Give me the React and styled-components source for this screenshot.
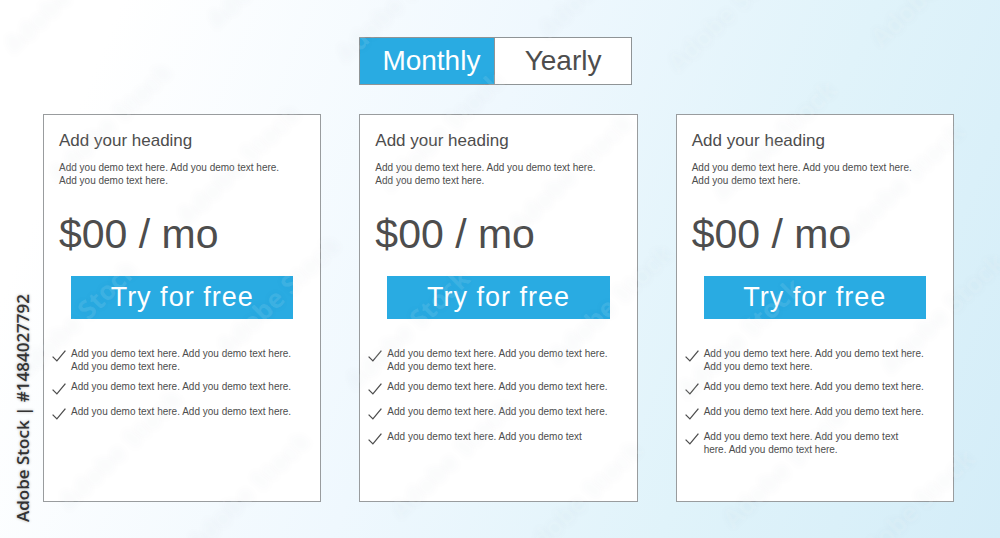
import React, { useState } from "react";
import styled, { createGlobalStyle } from "styled-components";

const GlobalStyle = createGlobalStyle`
  * {
    box-sizing: border-box;
  }

  body {
    margin: 0;
    font-family: "Liberation Sans", Arial, sans-serif;
    color: #4d4d4d;
  }
`;

const Page = styled.main`
  position: relative;
  min-height: 100vh;
  padding: 37px 46px 36px 43px;
  display: flex;
  flex-direction: column;
  gap: 29px;
  overflow: hidden;
  background: linear-gradient(112deg, #ffffff 10%, #eff8fe 45%, #e0f3fa 72%, #d4edf8 100%);
`;

const Columns = styled.div`
  display: grid;
  grid-template-columns: repeat(3, 1fr);
  column-gap: 38px;
  flex: ${props => (props.$fill ? 1 : "none")};
`;

const Toggle = styled.div`
  grid-column: 2;
  height: 48px;
  margin-right: 6px;
  display: flex;
  border: 1px solid #8f9496;
  background: #ffffff;
`;

const ToggleButton = styled.button`
  width: 50%;
  padding: 0;
  padding-left: ${props => (props.$divided ? "8px" : 0)};
  border: none;
  border-right: ${props => (props.$divided ? "1px solid #8f9496" : "none")};
  font: inherit;
  font-size: 28px;
  line-height: 44px;
  cursor: pointer;
  color: ${props => (props.$active ? "#ffffff" : "#4d4d4d")};
  background: ${props => (props.$active ? "#29abe2" : "#ffffff")};
`;

const Card = styled.section`
  padding: 16px 0;
  border: 1px solid #999c9e;
  background: #ffffff;
`;

const Summary = styled.div`
  padding: 0 15px;
`;

const Heading = styled.h2`
  margin: 0 0 10px;
  font-size: 17px;
  font-weight: 400;
  line-height: 20px;
`;

const Text = styled.p`
  margin: 0;
  font-size: 10px;
  line-height: 13px;
`;

const Price = styled.p`
  margin: 23px 0 18px;
  font-size: 41px;
  line-height: 48px;
`;

const TryButton = styled.button`
  display: block;
  width: calc(100% - 24px);
  height: 43px;
  margin: 0 12px 28px;
  padding: 0;
  border: none;
  font: inherit;
  font-size: 27px;
  letter-spacing: 1px;
  color: #ffffff;
  background: #29abe2;
  cursor: pointer;
`;

const Features = styled.ul`
  list-style: none;
  margin: 0;
  padding: 0 8px;
  display: flex;
  flex-direction: column;
  gap: 7px;
`;

const Feature = styled.li`
  min-height: 18px;
  display: flex;
  gap: 5px;

  svg {
    flex: none;
    margin-top: 3px;
  }
`;

const Mark = styled.span`
  position: absolute;
  transform: translate(-50%, -50%) rotate(-44deg);
  font-family: "Open Sans", sans-serif;
  font-size: 26px;
  font-weight: 700;
  line-height: 30px;
  white-space: nowrap;
  color: rgba(255, 255, 255, 0.1);
  text-shadow: 0 0 8px rgba(60, 80, 90, 0.04);
  pointer-events: none;
`;

const SideLabel = styled.span`
  position: absolute;
  left: 12px;
  bottom: 16px;
  writing-mode: vertical-rl;
  transform: rotate(180deg);
  font-family: "Open Sans", sans-serif;
  font-size: 17px;
  font-weight: 600;
  line-height: 22px;
  white-space: nowrap;
  color: #333333;
  text-shadow: 0 0 3px rgba(0, 0, 0, 0.3);
`;

const demo = "Add you demo text here.";
const twice = `${demo} ${demo}`;

const plans = [
  [[twice, demo], [twice], [twice]],
  [[twice, demo], [twice], [twice], [`${demo} Add you demo text`]],
  [[twice, demo], [twice], [twice], [`${demo} Add you demo text`, `here. ${demo}`]],
];

// centres of the four marks inside one 332 x 327 tile
const tile = [[65, -7], [268, -32], [110, 122], [238, 164]];
const marks = [0, 1].flatMap(row =>
  [0, 1, 2].flatMap(col =>
    tile.map(([x, y]) => ({
      left: x + col * 332 + row * 10,
      top: y + col * 9 + row * 327,
    }))
  )
);

const Check = () => (
  <svg width="14" height="12" viewBox="0 0 14 12" fill="none" aria-hidden="true">
    <path d="M0.6 6.6 L4.9 10.9 L13.4 0.7" stroke="#4d4d4d" strokeWidth="1.3" />
  </svg>
);

const Lines = ({ lines }) =>
  lines.map((line, i) => (
    <React.Fragment key={i}>
      {i > 0 && <br />}
      {line}
    </React.Fragment>
  ));

const PlanCard = ({ features }) => (
  <Card>
    <Summary>
      <Heading>Add your heading</Heading>
      <Text>
        <Lines lines={[twice, demo]} />
      </Text>
      <Price>$00 / mo</Price>
      <TryButton type="button">Try for free</TryButton>
    </Summary>
    <Features>
      {features.map((lines, i) => (
        <Feature key={i}>
          <Check />
          <Text>
            <Lines lines={lines} />
          </Text>
        </Feature>
      ))}
    </Features>
  </Card>
);

const App = () => {
  const [period, setPeriod] = useState("Monthly");

  return (
    <>
      <GlobalStyle />
      <Page>
        <Columns>
          <Toggle role="group" aria-label="Billing period">
            {["Monthly", "Yearly"].map((name, i) => (
              <ToggleButton
                key={name}
                type="button"
                $active={period === name}
                $divided={i === 0}
                aria-pressed={period === name}
                onClick={() => setPeriod(name)}
              >
                {name}
              </ToggleButton>
            ))}
          </Toggle>
        </Columns>
        <Columns $fill>
          {plans.map((features, i) => (
            <PlanCard key={i} features={features} />
          ))}
        </Columns>
        {marks.map((place, i) => (
          <Mark key={i} style={place} aria-hidden="true">
            Adobe Stock
          </Mark>
        ))}
        <SideLabel>Adobe Stock | #1484027792</SideLabel>
      </Page>
    </>
  );
};

export default App;
